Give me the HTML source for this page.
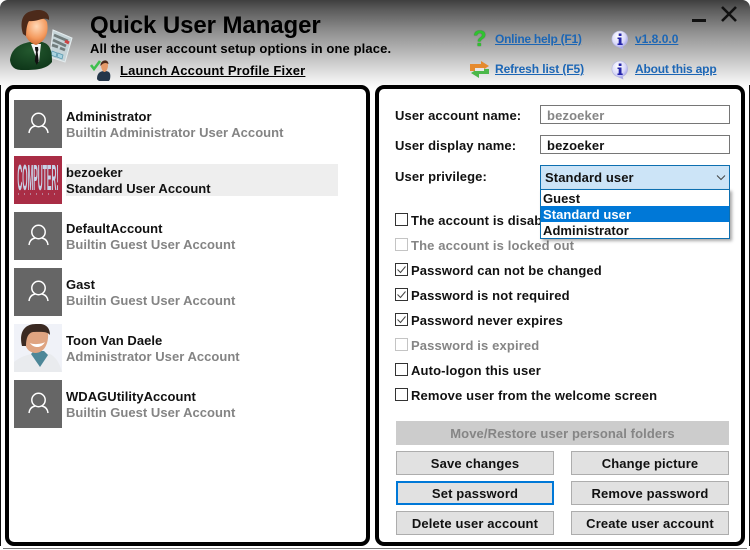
<!DOCTYPE html>
<html>
<head>
<meta charset="utf-8">
<style>
html,body{margin:0;padding:0;background:#fff}
body{width:750px;height:550px;position:relative;overflow:hidden;font:bold 13px/16px "Liberation Sans",Arial,sans-serif;color:#111;letter-spacing:.14px}
#hdr{position:absolute;left:0;top:0;width:750px;height:90px;background:linear-gradient(#3f3f3f 0,#5a5a5a 10%,#8f8f8f 35%,#c4c4c4 65%,#f4f4f4 92%,#fff 100%)}
.a{position:absolute;white-space:nowrap}
.panel{position:absolute;top:85px;height:453px;border:4px solid #000;border-radius:9px;background:#fff}
.lnk{color:#1c66b5;text-decoration:underline;font-size:12px;letter-spacing:-.15px}
.av{position:absolute;left:14px;width:48px;height:48px;background:#666}
.av svg{display:block}
.n{position:absolute;left:66px;white-space:nowrap;letter-spacing:.03px}
.s{color:#848484}
.sel{position:absolute;left:66px;top:164px;width:272px;height:32px;background:#eee}
.tb{position:absolute;left:540px;width:182px;height:17px;border:1px solid #767676;padding-left:6px;line-height:19px;background:#fff}
.cb{position:absolute;left:395px;width:11px;height:11px;border:1px solid #333;background:#fff}
.cb.d{border-color:#c4c4c4}
.cb svg{position:absolute;left:0;top:0}
.cl{position:absolute;left:411px;white-space:nowrap}
.g{color:#858585}
.btn{position:absolute;height:22px;border:1px solid #adadad;background:#e1e1e1;text-align:center;line-height:24px;box-sizing:content-box;white-space:nowrap}
</style>
</head>
<body>
<div id="hdr"></div>
<!-- window corners -->
<svg class="a" style="left:0;top:0" width="8" height="8"><path d="M0 0H7A8 8 0 0 0 0 7Z" fill="#fff"/></svg>
<svg class="a" style="left:742px;top:0" width="8" height="8"><path d="M8 0H1A8 8 0 0 1 8 7Z" fill="#fff"/></svg>
<div class="a" style="left:0;top:85px;width:1px;height:461px;background:#111"></div>
<div class="a" style="left:749px;top:85px;width:1px;height:461px;background:#111"></div>
<div class="a" style="left:3px;top:548px;width:744px;height:1px;background:#777"></div>

<!-- logo -->
<svg class="a" style="left:8px;top:8px" width="68" height="66" viewBox="0 0 68 66">
<defs>
<radialGradient id="f" cx=".55" cy=".35" r=".7"><stop offset="0" stop-color="#ffd9b8"/><stop offset=".6" stop-color="#f49a5e"/><stop offset="1" stop-color="#c8622a"/></radialGradient>
<radialGradient id="su" cx=".5" cy=".3" r=".8"><stop offset="0" stop-color="#24592f"/><stop offset="1" stop-color="#0c3317"/></radialGradient>
</defs>
<path d="M45 22 64 30 57 54 42 49Z" fill="#c6d4d8" stroke="#e4ecee" stroke-width="1"/>
<path d="M46 27 60 33M45 32 58 38M44 37 50 39M52 40 57 42" stroke="#717c7c" stroke-width="2.800"/>
<path d="M57 33 61 35" stroke="#c44" stroke-width="3"/>
<path d="M44 43 49 45 48 49 43 47ZM50 45 55 47 54 51 49 49Z" fill="#a9d3e0" stroke="#5c9ab0" stroke-width=".8"/>
<path d="M2 52C3 42 10 36 22 34H34C42 36 44 42 44 54 38 62 26 62 14 62 8 62 3 60 2 52Z" fill="url(#su)"/>
<path d="M23 36 33 36 31 54 29 52Z" fill="#f2f2f2"/>
<path d="M27 39h3l.4 3-.8 2 1.200 9-2 4-2-4 1.200-9-.8-2Z" fill="#111"/>
<path d="M15 12C15 24 18 34 28 37 38 33 41 24 39 14 36 8 20 6 15 12Z" fill="url(#f)"/>
<path d="M15 26C12 16 13 5 24 3 34 0 42 4 41 12 36 8 30 14 21 13 19 16 18 22 18 28Z" fill="#4c2a1a"/>
</svg>

<div class="a" style="left:90px;top:12px;font-size:24px;line-height:28px;color:#000;letter-spacing:-.08px">Quick User Manager</div>
<div class="a" style="left:90px;top:41px;color:#000;letter-spacing:.12px">All the user account setup options in one place.</div>
<svg class="a" style="left:90px;top:58px" width="22" height="23" viewBox="0 0 22 23">
<path d="M1 7 4 11 10 3" fill="none" stroke="#3fc04f" stroke-width="2.600"/>
<path d="M7 21C7 15 10 13 15 13S21 16 20 21 8 24 7 21Z" fill="#24364a"/>
<path d="M11 7C11 2 18 2 18 7 18 11 16 14 14.500 14 13 14 11 11 11 7Z" fill="#e59a69"/>
<path d="M10.500 8C10 2 18 0 18.500 6 15 4 13 5 10.500 8Z" fill="#4c2a1a"/>
</svg>
<div class="a" style="left:120px;top:63px;color:#000;text-decoration:underline;letter-spacing:.19px">Launch Account Profile Fixer</div>

<!-- window buttons -->
<div class="a" style="left:692px;top:19px;width:14px;height:3px;background:#111"></div>
<svg class="a" style="left:720px;top:5px" width="18" height="18"><path d="M2 2 16 16M16 2 2 16" stroke="#111" stroke-width="2.600"/></svg>

<!-- links -->
<div class="a" style="left:473px;top:28px;font-size:22px;line-height:22px;color:#2fc22f;text-shadow:0 0 1px #0a6d0a">?</div>
<div class="a lnk" style="left:495px;top:31px;letter-spacing:-.25px">Online help (F1)</div>
<svg class="a" style="left:611px;top:30px" width="18" height="20" viewBox="0 0 18 20">
<defs><radialGradient id="i" cx=".4" cy=".3" r=".75"><stop offset="0" stop-color="#fff"/><stop offset=".6" stop-color="#d8d8f8"/><stop offset="1" stop-color="#8f8ce8"/></radialGradient></defs>
<path d="M9 1A8 8 0 0 0 5 16L12 19 11.500 16.500A8 8 0 0 0 9 1Z" fill="url(#i)" stroke="#b6b6da" stroke-width=".6"/>
<path d="M6.500 7.500h4v6h1.200v1.500h-5.200v-1.500h1.200v-4.500h-1.200ZM7.700 3.500h2.800v2.500H7.700Z" fill="#2424a8"/>
</svg>
<div class="a lnk" style="left:635px;top:31px;letter-spacing:0">v1.8.0.0</div>

<svg class="a" style="left:469px;top:60px" width="21" height="20" viewBox="0 0 21 20">
<path d="M1 4H12V1L20 6 12 11V8H6V11H1Z" fill="#e58a2e"/>
<path d="M20 9V14H10V18L2 13 10 8V11H15V9Z" fill="#4cb84a"/>
<path d="M6 8H15V11H6Z" fill="#e8e8e8"/>
</svg>
<div class="a lnk" style="left:495px;top:61px;letter-spacing:-.1px">Refresh list (F5)</div>
<svg class="a" style="left:611px;top:60px" width="18" height="20" viewBox="0 0 18 20">
<path d="M9 1A8 8 0 0 0 5 16L12 19 11.500 16.500A8 8 0 0 0 9 1Z" fill="url(#i)" stroke="#b6b6da" stroke-width=".6"/>
<path d="M6.500 7.500h4v6h1.200v1.500h-5.200v-1.500h1.200v-4.500h-1.200ZM7.700 3.500h2.800v2.500H7.700Z" fill="#2424a8"/>
</svg>
<div class="a lnk" style="left:635px;top:61px;letter-spacing:-.18px">About this app</div>

<!-- panels -->
<div class="panel" style="left:5px;width:357px"></div>
<div class="panel" style="left:375px;width:362px"></div>

<!-- user list -->
<div class="sel"></div>
<div class="av" style="top:100px"><svg width="48" height="48"><circle cx="24.500" cy="20" r="6.700" fill="none" stroke="#fff" stroke-width="1.500"/><path d="M15 33C15.500 28 19 26.500 21 26M34 33C33.500 28 30 26.500 28 26" fill="none" stroke="#fff" stroke-width="1.500"/></svg></div>
<div class="n" style="top:109px">Administrator<br><span class="s">Builtin Administrator User Account</span></div>

<div class="av" style="top:156px;background:#a92d45;overflow:hidden"><svg width="48" height="48"><text transform="translate(24 34) scale(.62 3.300)" text-anchor="middle" font-family="Liberation Sans" font-weight="bold" font-size="11" letter-spacing="0" fill="#c7d3e8">COMPUTER!</text><path d="M4 38h40" stroke="#c7d3e8" stroke-width="1" stroke-dasharray="1 5"/></svg></div>
<div class="n" style="top:165px">bezoeker<br>Standard User Account</div>

<div class="av" style="top:212px"><svg width="48" height="48"><circle cx="24.500" cy="20" r="6.700" fill="none" stroke="#fff" stroke-width="1.500"/><path d="M15 33C15.500 28 19 26.500 21 26M34 33C33.500 28 30 26.500 28 26" fill="none" stroke="#fff" stroke-width="1.500"/></svg></div>
<div class="n" style="top:221px">DefaultAccount<br><span class="s">Builtin Guest User Account</span></div>

<div class="av" style="top:268px"><svg width="48" height="48"><circle cx="24.500" cy="20" r="6.700" fill="none" stroke="#fff" stroke-width="1.500"/><path d="M15 33C15.500 28 19 26.500 21 26M34 33C33.500 28 30 26.500 28 26" fill="none" stroke="#fff" stroke-width="1.500"/></svg></div>
<div class="n" style="top:277px">Gast<br><span class="s">Builtin Guest User Account</span></div>

<div class="av" style="top:324px;background:#f0f2f8;overflow:hidden"><svg width="48" height="48" viewBox="0 0 48 48">
<path d="M0 48V38C6 33 14 30 20 30L36 30C42 33 46 40 48 48Z" fill="#e9ebee"/>
<path d="M17 30 26 43 34 31 30 27H20Z" fill="#4d8798"/>
<path d="M10 10C10 22 13 28 21 29 30 29 35 20 34 8 28 3 14 3 10 10Z" fill="#dfa481"/>
<path d="M8 22C5 10 9 0 22 0 31-1 36 3 36 11 33 7 26 8 19 8 14 9 12 14 12 22Z" fill="#3b2a22"/>
<path d="M16 19C20 25 28 24 31 18 28 20 20 21 16 19Z" fill="#fff"/>
</svg></div>
<div class="n" style="top:333px">Toon Van Daele<br><span class="s">Administrator User Account</span></div>

<div class="av" style="top:380px"><svg width="48" height="48"><circle cx="24.500" cy="20" r="6.700" fill="none" stroke="#fff" stroke-width="1.500"/><path d="M15 33C15.500 28 19 26.500 21 26M34 33C33.500 28 30 26.500 28 26" fill="none" stroke="#fff" stroke-width="1.500"/></svg></div>
<div class="n" style="top:389px">WDAGUtilityAccount<br><span class="s">Builtin Guest User Account</span></div>

<!-- form -->
<div class="a" style="left:395px;top:108px;letter-spacing:.11px">User account name:</div>
<div class="tb g" style="top:105px">bezoeker</div>
<div class="a" style="left:395px;top:138px;letter-spacing:.11px">User display name:</div>
<div class="tb" style="top:135px">bezoeker</div>
<div class="a" style="left:395px;top:169px;letter-spacing:.11px">User privilege:</div>
<div class="a" style="left:540px;top:165px;height:23px;border:1px solid #0d6fb0;background:#cce4f7;line-height:23px;padding-left:4px;box-sizing:content-box;width:184px;letter-spacing:.1px">Standard user</div>
<svg class="a" style="left:716px;top:174px" width="10" height="7"><path d="M1 1.500 5 5.500 9 1.500" fill="none" stroke="#444" stroke-width="1"/></svg>

<div class="cb" style="top:213px"></div><div class="cl" style="top:213px">The account is disabled</div>
<div class="cb d" style="top:238px"></div><div class="cl g" style="top:238px">The account is locked out</div>
<div class="cb" style="top:263px"><svg width="11" height="11"><path d="M1.500 5.500 4.500 8.500 9.500 2.500" fill="none" stroke="#444" stroke-width="1"/></svg></div><div class="cl" style="top:263px">Password can not be changed</div>
<div class="cb" style="top:288px"><svg width="11" height="11"><path d="M1.500 5.500 4.500 8.500 9.500 2.500" fill="none" stroke="#444" stroke-width="1"/></svg></div><div class="cl" style="top:288px">Password is not required</div>
<div class="cb" style="top:313px"><svg width="11" height="11"><path d="M1.500 5.500 4.500 8.500 9.500 2.500" fill="none" stroke="#444" stroke-width="1"/></svg></div><div class="cl" style="top:313px">Password never expires</div>
<div class="cb d" style="top:338px"></div><div class="cl g" style="top:338px">Password is expired</div>
<div class="cb" style="top:363px"></div><div class="cl" style="top:363px">Auto-logon this user</div>
<div class="cb" style="top:388px"></div><div class="cl" style="top:388px">Remove user from the welcome screen</div>

<!-- dropdown -->
<div class="a" style="left:540px;top:189px;width:188px;height:48px;border:1px solid #0d6fb0;background:#fff;box-shadow:2px 2px 3px rgba(0,0,0,.35);line-height:18px;letter-spacing:.05px">
<div style="height:16px;padding-left:2px">Guest</div>
<div style="height:16px;padding-left:2px;background:#0078d7;color:#fff">Standard user</div>
<div style="height:16px;padding-left:2px">Administrator</div>
</div>

<!-- buttons -->
<div class="btn" style="left:396px;top:421px;width:331px;background:#ccc;border-color:#ccc;color:#858585;letter-spacing:.1px">Move/Restore user personal folders</div>
<div class="btn" style="left:396px;top:451px;width:156px">Save changes</div>
<div class="btn" style="left:571px;top:451px;width:156px">Change picture</div>
<div class="btn" style="left:396px;top:481px;width:154px;height:20px;line-height:22px;border:2px solid #0078d7">Set password</div>
<div class="btn" style="left:571px;top:481px;width:156px">Remove password</div>
<div class="btn" style="left:396px;top:511px;width:156px">Delete user account</div>
<div class="btn" style="left:571px;top:511px;width:156px">Create user account</div>
</body>
</html>
